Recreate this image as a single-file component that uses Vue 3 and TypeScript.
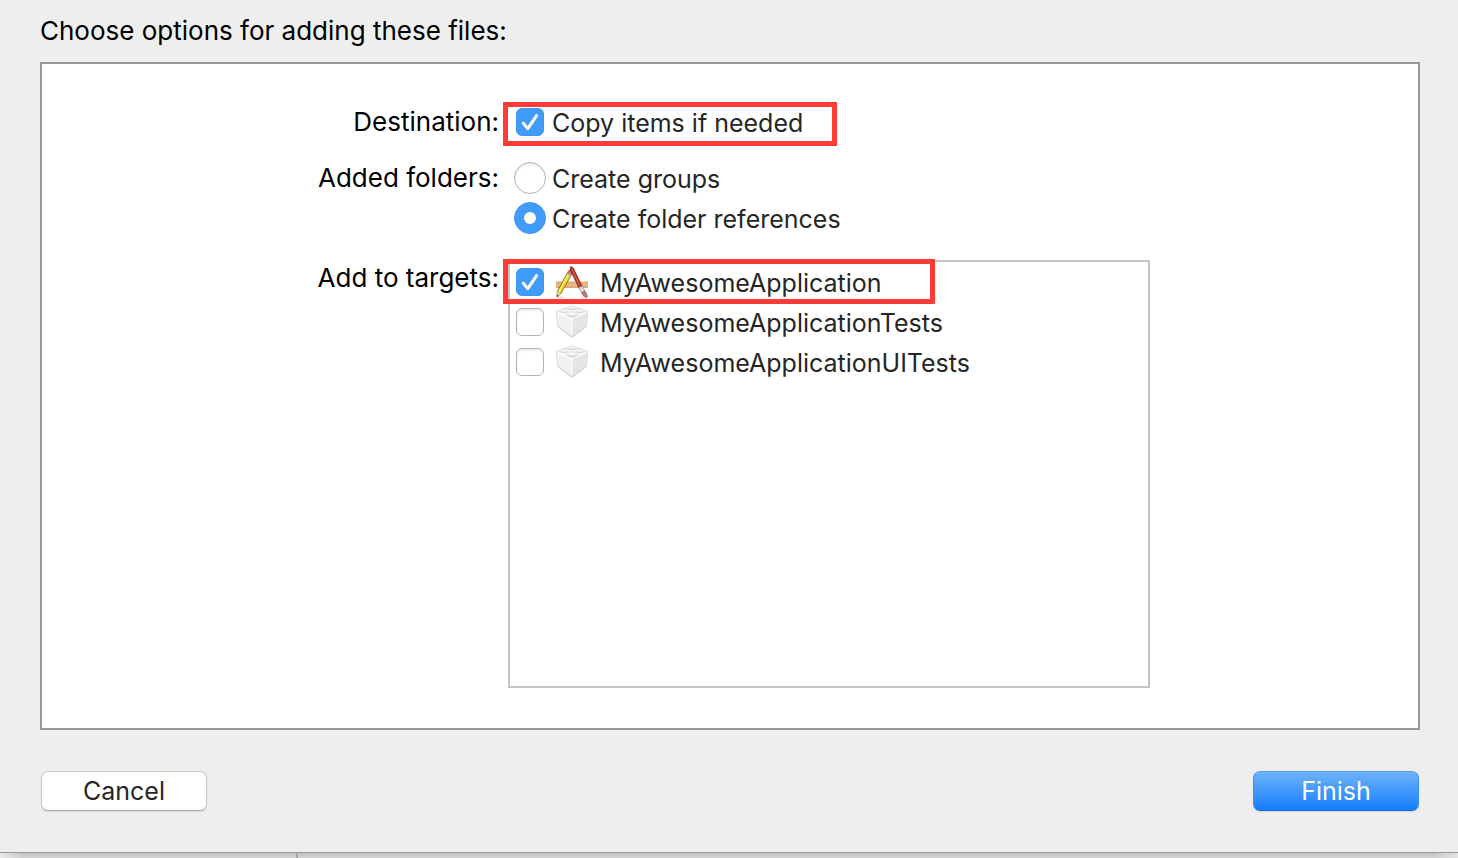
<script setup lang="ts">
import { ref } from 'vue'

interface Target {
  name: string
  kind: 'app' | 'tests'
  selected: boolean
}

const copyItems = ref(true)
const folderMode = ref<'groups' | 'references'>('references')
const folderModes = [
  { value: 'groups', label: 'Create groups' },
  { value: 'references', label: 'Create folder references' },
]
const targets = ref<Target[]>([
  { name: 'MyAwesomeApplication', kind: 'app', selected: true },
  { name: 'MyAwesomeApplicationTests', kind: 'tests', selected: false },
  { name: 'MyAwesomeApplicationUITests', kind: 'tests', selected: false },
])
</script>

<template>
  <div class="window">
    <form class="sheet" @submit.prevent>
      <h1 class="title">Choose options for adding these files:</h1>

      <div class="panel">
        <span class="caption">Destination:</span>
        <div class="row marked">
          <label class="option">
            <span class="control">
              <input v-model="copyItems" class="check" type="checkbox" />
              <svg v-if="copyItems" class="tick" viewBox="0 0 28 28" aria-hidden="true">
                <path d="M7.3 15.2 L11.8 20.6 L20.6 7.6" />
              </svg>
            </span>
            <span class="text">Copy items if needed</span>
          </label>
          <span class="marker marker-copy"></span>
        </div>

        <span class="caption folders">Added folders:</span>
        <div class="folders" role="radiogroup" aria-label="Added folders">
          <label v-for="mode in folderModes" :key="mode.value" class="option">
            <span class="control">
              <input v-model="folderMode" class="radio" type="radio" name="folders" :value="mode.value" />
            </span>
            <span class="text">{{ mode.label }}</span>
          </label>
        </div>

        <span class="caption targets-caption">Add to targets:</span>
        <ul class="targets">
          <li v-for="target in targets" :key="target.name" class="marked">
            <label class="option">
              <span class="control">
                <input v-model="target.selected" class="check" type="checkbox" />
                <svg v-if="target.selected" class="tick" viewBox="0 0 28 28" aria-hidden="true">
                  <path d="M7.3 15.2 L11.8 20.6 L20.6 7.6" />
                </svg>
              </span>
              <svg v-if="target.kind === 'app'" class="icon" viewBox="0 -1 34 34" aria-hidden="true">
                <ellipse cx="6" cy="31.5" rx="4" ry="1" fill="#e2e2e2" />
                <ellipse cx="29" cy="31.5" rx="4" ry="1" fill="#e2e2e2" />
                <rect x="1" y="15" width="32" height="6.5" fill="#e6b887" />
                <path d="M1 15.5h32" stroke="#f0d0a8" />
                <path d="M1 21.3h32" stroke="#cf9c6a" />
                <path d="M4 16v2M7 16v2M10 16v2M13 16v2M16 16v2M19 16v2M22 16v2M25 16v2M28 16v2M31 16v2" stroke="#c99866" stroke-width=".7" />
                <path d="M12.2 7 L16.2 9.2 L5.8 27.7 L2 31 L2.3 25.6z" fill="#f2d82d" stroke="#73631b" stroke-width=".8" />
                <path d="M13.2 8.6 L3.6 26" stroke="#fff176" stroke-width="1" />
                <path d="M2.3 26 L5.6 27.9 L2 31z" fill="#ead0a0" />
                <path d="M2.2 28.7 L3.8 29.6 L2 31.2z" fill="#333" />
                <path d="M12.5 6.5 L13.8 4.4 Q15.2 3.4 16.8 4.8 Q18 5.9 17.5 7 L16.3 9z" fill="#e06d77" stroke="#84454b" stroke-width=".6" />
                <path d="M12 7.4 L16 9.7" stroke="#a9b4bd" stroke-width="1.5" />
                <path d="M15.4 1 Q17.2 0 18.4 2.3 L27 20.3 L23.9 21.8 L15.4 4.2z" fill="#b9301d" stroke="#702015" stroke-width=".7" />
                <path d="M16.6 2.5 L24.6 19.8" stroke="#eb735b" stroke-width=".9" />
                <path d="M23.8 21.6 L27.3 20 L29.9 25.2 L26.6 26.8z" fill="#dedede" stroke="#85817e" stroke-width=".7" />
                <path d="M26.6 26.6 L30 25 Q32.8 28.2 32.3 31.6 Q27.8 31 26.6 26.6z" fill="#b98371" stroke="#86594d" stroke-width=".6" />
              </svg>
              <svg v-else class="icon" viewBox="0 0 34 34" aria-hidden="true">
                <path d="M1.5 6.5 L14 2 L20 2 L32.5 6.5 L31.5 21.5 L17 32.5 L2.5 21.5z" fill="#f4f4f4" stroke="#cbcbcb" stroke-width=".8" stroke-linejoin="round" />
                <path d="M1.8 7 L17 14.2 L17 32 L2.8 21.3z" fill="#f0f0f0" />
                <path d="M32.2 7 L17 14.2 L17 32 L31.2 21.3z" fill="#e5e5e5" />
                <path d="M2.5 6.7 L17 2 L31.5 6.7 L17 13.6z" fill="#f4f4f4" />
                <path d="M2 7.2 L17 14.2 L32 7.2 M17 14.2V30" fill="none" stroke="#fff" stroke-width="1" />
                <path d="M4 22.2 L17 31.8 L30 22.2" fill="none" stroke="#d0d0d0" stroke-width=".8" />
                <g fill="#dadada">
                  <ellipse cx="17" cy="3.6" rx="4" ry="1.8" />
                  <ellipse cx="9.2" cy="6.6" rx="3.8" ry="1.7" />
                  <ellipse cx="24.8" cy="6.6" rx="3.8" ry="1.7" />
                  <ellipse cx="17" cy="10.6" rx="4.8" ry="2" />
                </g>
                <g fill="#f6f6f6" stroke="#d6d6d6" stroke-width=".5">
                  <ellipse cx="17" cy="2.4" rx="3.8" ry="1.5" />
                  <ellipse cx="9.2" cy="5.5" rx="3.6" ry="1.5" />
                  <ellipse cx="24.8" cy="5.5" rx="3.6" ry="1.5" />
                  <ellipse cx="17" cy="8.8" rx="4.6" ry="1.9" />
                </g>
              </svg>
              <span class="text">{{ target.name }}</span>
            </label>
            <span v-if="target.kind === 'app'" class="marker marker-target"></span>
          </li>
        </ul>
      </div>

      <footer class="actions">
        <button class="button" type="button">Cancel</button>
        <button class="button primary" type="submit">Finish</button>
      </footer>
    </form>
    <div class="backdrop"></div>
  </div>
</template>

<style>
body {
  margin: 0;
}
</style>

<style scoped>
.window {
  display: flex;
  flex-direction: column;
  min-height: 100vh;
  background: #eee;
  color: #000;
  font-family: Inter, "Liberation Sans", sans-serif;
  font-size: 25px;
}
.sheet {
  flex: 1;
  display: flex;
  flex-direction: column;
  padding: 0 38px 0 40px;
}
.title {
  margin: 0;
  font-size: 26px;
  font-weight: 400;
  line-height: 62px;
}
.panel {
  flex: 1;
  display: grid;
  grid-template-columns: minmax(200px, 1fr) minmax(0, 642px);
  grid-template-rows: auto auto 1fr;
  column-gap: 9px;
  padding: 38px 268px 40px 0;
  border: 2px solid #999;
  background: #fff;
}
.caption {
  font-size: 26px;
  text-align: right;
  line-height: 40px;
}
.folders {
  margin-top: 16px;
}
.targets-caption {
  margin-top: 22px;
  line-height: 36px;
}
.marked {
  position: relative;
}
.option {
  display: flex;
  align-items: center;
  height: 40px;
  padding-left: 6px;
  color: #262626;
  white-space: nowrap;
}
.text {
  padding-top: 2px;
  line-height: 38px;
}
.control {
  display: grid;
  place-items: center;
  width: 32px;
  height: 32px;
  margin-right: 6px;
}
.control > * {
  grid-area: 1 / 1;
}
.check,
.radio {
  appearance: none;
  box-sizing: border-box;
  margin: 0;
  border: 1px solid #b4b4b4;
  background: #fff;
  box-shadow: inset 0 2px 2px #ececec;
}
.check {
  width: 28px;
  height: 28px;
  border-radius: 6px;
}
.radio {
  display: grid;
  place-items: center;
  width: 32px;
  height: 32px;
  border-radius: 50%;
}
.check:checked,
.radio:checked {
  border-color: #3c96f8;
  background: #419bf9;
  box-shadow: none;
}
.radio:checked::after {
  content: "";
  width: 12px;
  height: 12px;
  border-radius: 50%;
  background: #fff;
}
.tick {
  width: 28px;
  height: 28px;
  pointer-events: none;
}
.tick path {
  fill: none;
  stroke: #fff;
  stroke-width: 3;
  stroke-linecap: round;
  stroke-linejoin: round;
}
.targets {
  margin: 22px 0 0;
  padding: 0;
  border: 2px solid #c5c5c5;
  list-style: none;
}
.targets .option {
  padding-left: 4px;
}
.icon {
  flex: none;
  width: 34px;
  height: 34px;
  margin: 0 11px 0 3px;
}
.marker {
  position: absolute;
  box-sizing: border-box;
  border: 5px solid #fe3b36;
  pointer-events: none;
}
.marker-copy {
  top: 0;
  left: -5px;
  width: 334px;
  height: 44px;
}
.marker-target {
  top: -3px;
  left: -7px;
  width: 432px;
  height: 45px;
}
.actions {
  display: flex;
  justify-content: space-between;
  padding: 41px 1px;
}
.button {
  box-sizing: border-box;
  width: 166px;
  height: 40px;
  padding: 0;
  border: 1px solid #c6c6c6;
  border-bottom-color: #adadad;
  border-radius: 7px;
  background: #fff;
  box-shadow: 0 1px 1px #d8d8d8;
  color: #262626;
  font: inherit;
}
.primary {
  border-color: #5aa3ee #3b8df4 #1468f5;
  background: linear-gradient(#6db3f9, #157efb);
  color: #fff;
}
.backdrop {
  height: 6px;
  box-sizing: border-box;
  border-top: 1px solid #999;
  background:
    linear-gradient(#a8a8a8, #a8a8a8) 296px 0 / 2px 100% no-repeat,
    linear-gradient(90deg, #e8e8e8, transparent 24px, transparent calc(100% - 24px), #e4e4e4),
    linear-gradient(#c2c2c2, #d2d2d2);
}
</style>
